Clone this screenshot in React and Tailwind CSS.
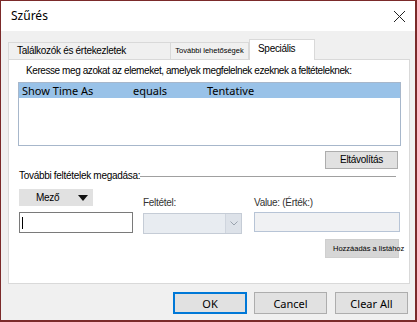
export default function App() {
  const ui = { fontFamily: '"Liberation Sans", Arial, sans-serif' };
  const seg = { fontFamily: '"Noto Sans", "Open Sans", sans-serif' };
  return (
    <div className="w-[417px] h-[322px] border-[#7b2a2a] border-t border-l border-r-2 border-b-2 bg-[#f0f0f0] flex flex-col text-black overflow-hidden" style={ui}>
      {/* title bar */}
      <div className="h-[30px] bg-white flex items-center justify-between pl-[10px] pr-[9px]">
        <span className="text-[12px] leading-none" style={seg}>Szűrés</span>
        <svg width="13" height="13" viewBox="0 0 13 13" className="mt-[1px]">
          <path d="M1 1 L12 12 M12 1 L1 12" stroke="#222" strokeWidth="1" />
        </svg>
      </div>
      {/* tabs */}
      <div className="flex items-end pl-[7px] pt-[8px] h-[28px] relative z-10 text-[10px] tracking-[-0.3px]">
        <div className="w-[163px] h-[17px] border border-b-0 border-[#d9d9d9] bg-[#f0f0f0] flex items-center pl-[8px] leading-none">
          Találkozók és értekezletek
        </div>
        <div className="w-[78px] h-[17px] border border-b-0 border-l-0 border-[#d9d9d9] bg-[#f0f0f0] flex items-center justify-center text-[7.5px] tracking-normal leading-none">
          További lehetőségek
        </div>
        <div className="w-[66px] h-[21px] -mb-px border border-b-0 border-[#d9d9d9] bg-white flex items-center pl-[8px] pb-[2px] leading-none">
          Speciális
        </div>
      </div>
      {/* panel */}
      <div className="ml-[7px] w-[402px] h-[225px] border border-[#d9d9d9] bg-white flex flex-col pl-[9px] text-[10px] tracking-[-0.3px]">
        <div className="mt-[5px] ml-[8px] h-[12px] leading-[12px] whitespace-nowrap tracking-[-0.42px]">
          Keresse meg azokat az elemeket, amelyek megfelelnek ezeknek a feltételeknek:
        </div>
        <div className="mt-[5px] w-[383px] h-[64px] border border-[#a7b7cb] bg-white tracking-normal" style={seg}>
          <div className="h-[15px] bg-[#99c2e8] flex items-center text-[11px] leading-none pl-[3px]">
            <span className="w-[111px]">Show Time As</span>
            <span className="w-[74px]">equals</span>
            <span>Tentative</span>
          </div>
        </div>
        <div className="mt-[5px] ml-[307px] w-[73px] h-[18px] bg-[#e1e1e1] border border-[#adadad] flex items-center justify-center leading-none">
          Eltávolítás
        </div>
        <div className="mt-[1px] ml-[1px] w-[377px] h-[12px] flex items-center">
          <span className="leading-[12px] whitespace-nowrap">További feltételek megadása:</span>
          <div className="flex-1 h-px bg-[#a0a0a0] mt-px" />
        </div>
        <div className="mt-[7px] ml-[1px] flex items-start">
          <div className="flex flex-col w-[114px]">
            <div className="w-[74px] h-[17px] bg-[#e1e1e1] border border-[#e1e1e1] flex items-center leading-none">
              <span className="ml-[16px]">Mező</span>
              <svg width="10" height="6" viewBox="0 0 10 6" className="ml-[19px]">
                <path d="M0 0 L10 0 L5 6 Z" fill="#111" />
              </svg>
            </div>
            <div className="mt-[6px] w-[114px] h-[21px] border border-[#7a7a7a] bg-white flex items-center pl-[2px]">
              <div className="w-px h-[12px] bg-black" />
            </div>
          </div>
          <div className="ml-[10px] flex flex-col w-[99px]">
            <div className="mt-[8px] h-[12px] leading-[12px] text-[#333]">Feltétel:</div>
            <div className="mt-[4px] w-[99px] h-[21px] border border-[#c5ccd6] bg-[#e8ecf1] flex justify-end">
              <div className="w-[16px] h-full bg-[#dde2e9] border-l border-[#cfd5de] flex items-center justify-center">
                <svg width="8" height="5" viewBox="0 0 8 5">
                  <path d="M0.5 0.5 L4 4 L7.5 0.5" stroke="#9aa3ae" fill="none" strokeWidth="1" />
                </svg>
              </div>
            </div>
          </div>
          <div className="ml-[12px] flex flex-col w-[146px]">
            <div className="mt-[8px] h-[12px] leading-[12px] text-[#333]">Value: (Érték:)</div>
            <div className="mt-[3px] w-[146px] h-[20px] border border-[#b7c4d6] bg-[#f0f1f3]" />
          </div>
        </div>
        <div className="mt-[5px] ml-[307px] w-[74px] h-[19px] bg-[#d6d6d6] border border-[#cfcfcf] flex items-center pl-[7px] leading-none whitespace-nowrap text-[7.5px] tracking-normal">
          Hozzáadás a listához
        </div>
      </div>
      {/* footer */}
      <div className="flex justify-end pr-[7px] mt-[8px] text-[11px]" style={seg}>
        <div className="w-[74px] h-[22px] bg-[#e1e1e1] border-2 border-[#0078d7] flex items-center justify-center leading-none">OK</div>
        <div className="ml-[7px] w-[73px] h-[22px] bg-[#e1e1e1] border border-[#adadad] flex items-center justify-center leading-none">Cancel</div>
        <div className="ml-[8px] w-[73px] h-[22px] bg-[#e1e1e1] border border-[#adadad] flex items-center justify-center leading-none">Clear All</div>
      </div>
    </div>
  );
}
